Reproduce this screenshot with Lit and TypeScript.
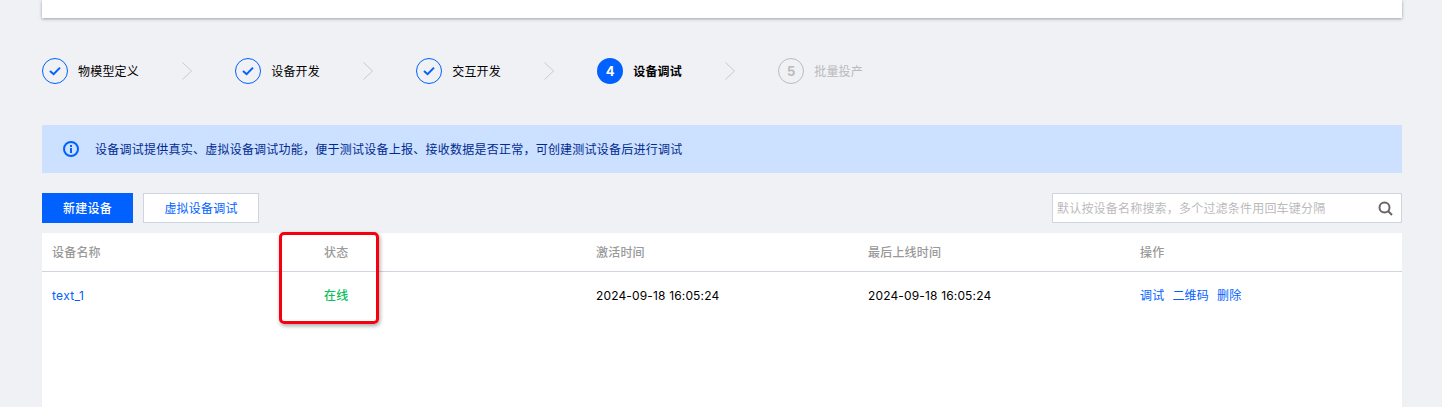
import { LitElement, html, css, nothing } from "lit";
import { customElement } from "lit/decorators.js";

const steps = [
  { label: "物模型定义", state: "done" },
  { label: "设备开发", state: "done" },
  { label: "交互开发", state: "done" },
  { label: "设备调试", state: "current", n: 4 },
  { label: "批量投产", state: "todo", n: 5 },
];

@customElement("app-root")
export class AppRoot extends LitElement {
  static styles = css`
    :host {
      display: block;
      position: relative;
      height: 407px;
      overflow: hidden;
      background: #f0f1f5;
      font-family: "Inter", "Noto Sans CJK SC", sans-serif;
      font-size: 12px;
      letter-spacing: 0.2px;
      color: #000;
    }
    .page { padding: 0 40px 0 42px; display: flex; flex-direction: column; }
    .top {
      height: 18px;
      background: #fff;
      box-shadow: 0 1px 3px rgba(54, 58, 80, 0.45);
    }
    .steps { display: flex; align-items: center; height: 26px; margin-top: 40px; }
    .step { display: flex; align-items: center; gap: 10px; }
    .lbl { padding-bottom: 2px; }
    .circle {
      box-sizing: border-box;
      width: 26px; height: 26px;
      border-radius: 50%;
      display: flex; align-items: center; justify-content: center;
      font-size: 13px; font-weight: 700;
    }
    .done .circle { border: 1px solid #0061ff; }
    .current .circle { background: #0061ff; color: #fff; }
    .current .lbl { font-weight: 600; }
    .todo .circle { border: 1px solid #bbb; color: #bbb; }
    .todo .lbl { color: #bbb; }
    .chev { display: block; margin: 0 43.2px 0 43px; }
    .alert {
      margin-top: 41px;
      height: 48px;
      background: #cce0ff;
      color: #002a8f;
      display: flex; align-items: center;
      padding-left: 21px;
      gap: 16px;
      letter-spacing: 0.24px;
    }
    .alert span { padding-bottom: 2px; }
    .toolbar { margin-top: 20px; display: flex; height: 30px; gap: 10px; }
    .btn {
      box-sizing: border-box;
      height: 30px;
      display: flex; align-items: center; justify-content: center;
      padding-bottom: 2px;
    }
    .primary { width: 91px; background: #0061ff; color: #fff; font-weight: 500; }
    .ghost { width: 116px; background: #fff; border: 1px solid #cfd5de; color: #0061ff; }
    .search {
      margin-left: auto;
      box-sizing: border-box;
      width: 350px; height: 30px;
      background: #fff;
      border: 1px solid #cfd5de;
      display: flex; align-items: center; justify-content: space-between;
      padding: 0 8px 0 4px;
      color: #bbb;
    }
    .search span { padding-bottom: 1px; }
    .table { margin-top: 10px; background: #fff; height: 174px; }
    .row {
      display: grid;
      grid-template-columns: repeat(5, 272px);
      align-items: center;
    }
    .row > div { padding-left: 10px; }
    .head { height: 38px; border-bottom: 1px solid #cfd5de; color: #999; font-weight: 500; }
    .head > div { padding-bottom: 2px; }
    .body { height: 47px; }
    .body > div { padding-bottom: 1px; }
    .body > .ok, .body > .ops { padding-bottom: 3px; }
    .body > .date { letter-spacing: 0.15px; }
    .body a.name { letter-spacing: 0.3px; }
    a { color: #0061ff; text-decoration: none; }
    .ok { color: #0abf5b; font-weight: 500; }
    .ops { display: flex; gap: 8px; }
    .mark {
      position: absolute;
      left: 279px; top: 232px;
      box-sizing: border-box;
      width: 100px; height: 92px;
      border: 3px solid #f5000f;
      border-radius: 5px;
      box-shadow: 1px 2px 4px rgba(0, 0, 0, 0.35);
    }
  `;

  private chevron() {
    return html`<svg class="chev" width="10" height="18" viewBox="0 0 10 18" fill="none">
      <path d="M0.5 0.5 L9.5 9 L0.5 17.5" stroke="#c8cad0" stroke-width="1" />
    </svg>`;
  }

  private stepIcon(s: (typeof steps)[number]) {
    if (s.state !== "done") return s.n;
    return html`<svg width="12" height="10" viewBox="0 0 12 10" fill="none">
      <path d="M1 5 L4.6 8.2 L11 1.6" stroke="#0061ff" stroke-width="2" />
    </svg>`;
  }

  render() {
    return html`
      <div class="page">
        <div class="top"></div>
        <div class="steps">
          ${steps.map(
            (s, i) => html`
              <div class="step ${s.state}">
                <span class="circle">${this.stepIcon(s)}</span>
                <span class="lbl">${s.label}</span>
              </div>
              ${i < steps.length - 1 ? this.chevron() : nothing}
            `
          )}
        </div>
        <div class="alert">
          <svg width="16" height="16" viewBox="0 0 16 16" fill="none">
            <circle cx="8" cy="8" r="7" stroke="#0061ff" stroke-width="2" />
            <rect x="7" y="7" width="2" height="5" fill="#0061ff" />
            <rect x="7" y="4" width="2" height="2" fill="#0061ff" />
          </svg>
          <span>设备调试提供真实、虚拟设备调试功能，便于测试设备上报、接收数据是否正常，可创建测试设备后进行调试</span>
        </div>
        <div class="toolbar">
          <div class="btn primary">新建设备</div>
          <div class="btn ghost">虚拟设备调试</div>
          <div class="search">
            <span>默认按设备名称搜索，多个过滤条件用回车键分隔</span>
            <svg width="15" height="15" viewBox="0 0 15 15" fill="none">
              <circle cx="6.5" cy="6.5" r="5" stroke="#666" stroke-width="2" />
              <path d="M10 10 L14 14" stroke="#666" stroke-width="2" />
            </svg>
          </div>
        </div>
        <div class="table">
          <div class="row head">
            <div>设备名称</div><div>状态</div><div>激活时间</div><div>最后上线时间</div><div>操作</div>
          </div>
          <div class="row body">
            <div><a class="name">text_1</a></div>
            <div class="ok">在线</div>
            <div class="date">2024-09-18 16:05:24</div>
            <div class="date">2024-09-18 16:05:24</div>
            <div class="ops"><a>调试</a><a>二维码</a><a>删除</a></div>
          </div>
        </div>
      </div>
      <div class="mark"></div>
    `;
  }
}
